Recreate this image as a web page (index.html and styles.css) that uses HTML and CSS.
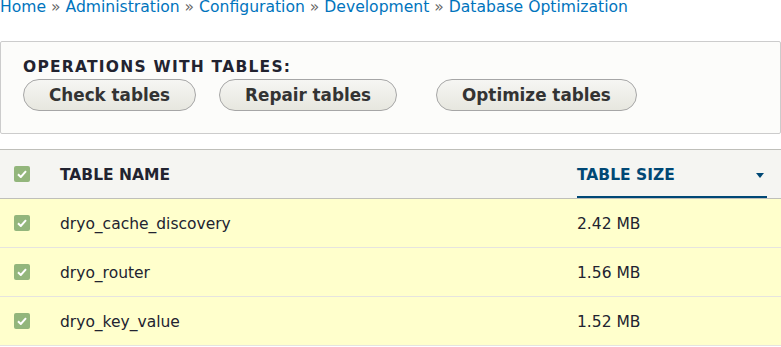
FILE: index.html
```html
<!DOCTYPE html>
<html lang="en">
<head>
    <meta charset="UTF-8">
    <meta name="viewport" content="width=device-width, initial-scale=1.0">
    <title>Database Optimization</title>
    <link rel="stylesheet" href="styles.css">
</head>
<body>
  <div class="breadcrumb">
    <a href="#">Home</a> » <a href="#">Administration</a> » <a href="#">Configuration</a> » <a href="#">Development</a> » <a href="#">Database Optimization</a>
  </div>

  <div class="ops">
    <div class="ops-title">Operations with tables:</div>
    <div class="ops-buttons">
      <button type="button" class="btn">Check tables</button>
      <button type="button" class="btn">Repair tables</button>
      <button type="button" class="btn btn-far">Optimize tables</button>
    </div>
  </div>

  <table class="tables">
    <thead>
      <tr>
        <th class="col-check"><span class="check"><svg width="10" height="8" viewBox="0 0 10 8"><path d="M1 4.2 L3.8 7 L9 1.2" fill="none" stroke="#fff" stroke-width="2"/></svg></span></th>
        <th class="col-name">Table name</th>
        <th class="col-size active">Table size <span class="arrow"></span></th>
      </tr>
    </thead>
    <tbody>
      <tr>
        <td class="col-check"><span class="check"><svg width="10" height="8" viewBox="0 0 10 8"><path d="M1 4.2 L3.8 7 L9 1.2" fill="none" stroke="#fff" stroke-width="2"/></svg></span></td>
        <td class="col-name">dryo_cache_discovery</td>
        <td class="col-size">2.42 MB</td>
      </tr>
      <tr>
        <td class="col-check"><span class="check"><svg width="10" height="8" viewBox="0 0 10 8"><path d="M1 4.2 L3.8 7 L9 1.2" fill="none" stroke="#fff" stroke-width="2"/></svg></span></td>
        <td class="col-name">dryo_router</td>
        <td class="col-size">1.56 MB</td>
      </tr>
      <tr>
        <td class="col-check"><span class="check"><svg width="10" height="8" viewBox="0 0 10 8"><path d="M1 4.2 L3.8 7 L9 1.2" fill="none" stroke="#fff" stroke-width="2"/></svg></span></td>
        <td class="col-name">dryo_key_value</td>
        <td class="col-size">1.52 MB</td>
      </tr>
    </tbody>
  </table>
</body>
</html>
```

FILE: styles.css
```css
body{
    margin: 0;
    background-color: white;
    font-family: "DejaVu Sans", sans-serif;
    font-size: 15.5px;
    color: #222330;
}
.breadcrumb{
    margin-top: -2px;
    height: 43px;
    line-height: 19px;
    font-size: 15.6px;
    color: #666;
}
.breadcrumb a{
    color: #0074bd;
    text-decoration: none;
}
.ops{
    box-sizing: border-box;
    width: 781px;
    height: 93px;
    padding: 16px 22px;
    background-color: #fcfcfa;
    border: 1px solid #ccc;
    border-radius: 2px;
}
.ops-title{
    font-size: 15.5px;
    font-weight: bold;
    text-transform: uppercase;
    letter-spacing: 0.08em;
    line-height: 18px;
    margin-bottom: 3px;
    color: #222330;
}
.ops-buttons{
    display: flex;
    gap: 23px;
}
.btn{
    height: 32px;
    padding: 0 25px;
    font-family: "DejaVu Sans", sans-serif;
    font-size: 16.8px;
    font-weight: bold;
    color: #333;
    background: linear-gradient(to bottom, #f6f6f3, #e7e7df);
    border: 1px solid #a6a6a6;
    border-radius: 20px;
}
.btn-far{
    margin-left: 16px;
}
.tables{
    margin-top: 15px;
    width: 781px;
    border-collapse: collapse;
}
.tables th{
    box-sizing: border-box;
    height: 49px;
    padding: 2px 0 0 0;
    text-align: left;
    font-size: 15.5px;
    font-weight: bold;
    text-transform: uppercase;
    color: #222330;
    background-color: #f5f5f2;
    border-top: 1px solid #bfbfba;
    border-bottom: 1px solid #bfbfba;
}
.tables td{
    box-sizing: border-box;
    height: 49px;
    padding: 2px 0 0 0;
    background-color: #ffc;
    border-bottom: 1px solid #e6e4df;
}
.col-check{
    width: 60px;
}
.tables .col-check{
    padding: 0 0 0 14px;
}
.col-name{
    width: 517px;
}
.tables .col-size{
    padding-right: 14px;
}
.tables th.active{
    position: relative;
    color: #004875;
}
.tables th.active::after{
    content: "";
    position: absolute;
    left: 0;
    right: 14px;
    bottom: 0;
    height: 2px;
    background-color: #004875;
}
.arrow{
    position: absolute;
    right: 17px;
    top: 23px;
    border-left: 4px solid transparent;
    border-right: 4px solid transparent;
    border-top: 5px solid #004875;
}
.check{
    display: flex;
    align-items: center;
    justify-content: center;
    width: 16px;
    height: 16px;
    border-radius: 2px;
    background-color: #93b67c;
}
```
